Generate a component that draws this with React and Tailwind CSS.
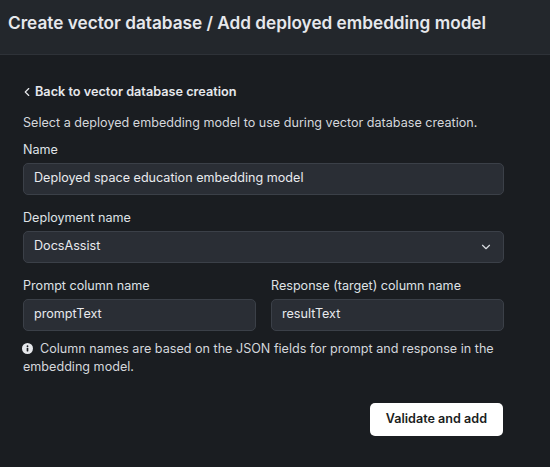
import { ChevronDown, ChevronLeft } from 'lucide-react';

function Field({ label, value, select }) {
  return (
    <div className="flex flex-col">
      <label className="text-[12.6px] text-[#dfe2e6] leading-[18px] mb-[4px]">{label}</label>
      <div className="h-[32px] rounded-[5px] border border-[#3b4048] bg-[#2a2e35] flex items-center justify-between px-[10px] text-[12.6px] text-[#e8eaee]">
        <span>{value}</span>
        {select && <ChevronDown size={14} strokeWidth={2} className="text-[#d8dbe0]" />}
      </div>
    </div>
  );
}

export default function App() {
  return (
    <div className="w-[550px] h-[467px] bg-[#1a1d21] flex flex-col" style={{ fontFamily: 'Inter, "Noto Sans", sans-serif' }}>
      {/* Header */}
      <div className="h-[55px] bg-[#23272c] border-b border-[#2e3238] flex items-center pl-[8px] pb-[8px]">
        <h1 className="text-[17.2px] font-semibold text-[#e6e8ec]">
          Create vector database / Add deployed embedding model
        </h1>
      </div>

      <div className="px-[23px] pt-[27px] w-[527px]">
        <button className="flex items-center gap-[1px] text-[12.7px] font-semibold text-[#e6e8ec] -ml-[3px]">
          <ChevronLeft size={14} strokeWidth={2} />
          Back to vector database creation
        </button>

        <p className="mt-[13px] text-[12.6px] text-[#d4d7dc]">
          Select a deployed embedding model to use during vector database creation.
        </p>

        <div className="mt-[8px] flex flex-col gap-[14px]">
          <Field label="Name" value="Deployed space education embedding model" />
          <Field label="Deployment name" value="DocsAssist" select />
          <div className="grid grid-cols-2 gap-[15px]">
            <Field label="Prompt column name" value="promptText" />
            <Field label="Response (target) column name" value="resultText" />
          </div>
        </div>

        <p className="mt-[9px] text-[12.6px] leading-[18px] text-[#d4d7dc]">
          <svg width="11" height="11" viewBox="0 0 16 16" className="inline-block align-[-1px] mr-[7px] ml-[-1px]">
            <circle cx="8" cy="8" r="8" fill="#e6e8ec" />
            <circle cx="8" cy="4.6" r="1.3" fill="#1a1d21" />
            <rect x="6.8" y="6.8" width="2.4" height="5.6" rx="0.6" fill="#1a1d21" />
          </svg>
          Column names are based on the JSON fields for prompt and response in the embedding model.
        </p>

        <div className="flex justify-end mt-[27px]">
          <button className="h-[33px] px-[16px] mr-[1px] rounded-[5px] bg-white text-[#1a1d21] text-[12.6px] font-semibold">
            Validate and add
          </button>
        </div>
      </div>
    </div>
  );
}
